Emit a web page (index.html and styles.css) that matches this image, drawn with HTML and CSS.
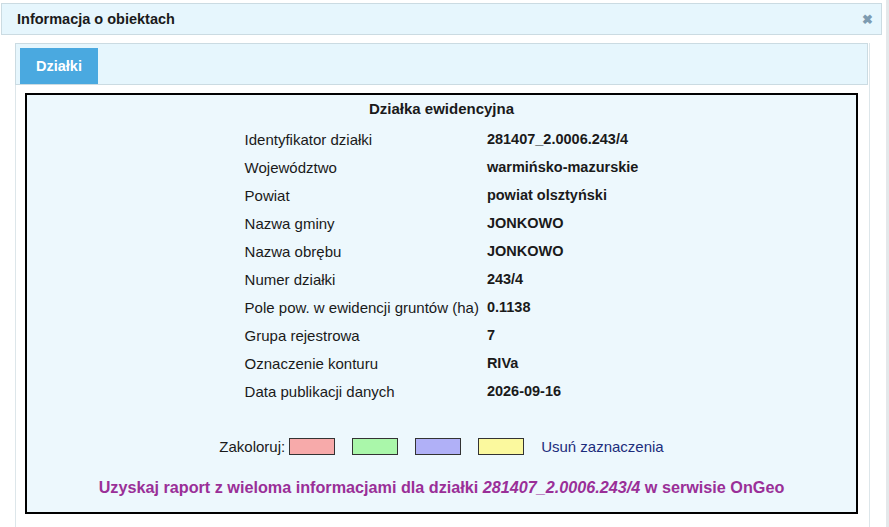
FILE: index.html
```html
<!DOCTYPE html>
<html lang="pl">
<head>
  <meta charset="UTF-8">
  <title>Informacja o obiektach</title>
  <link rel="stylesheet" href="styles.css">
</head>
<body>

<div class="dialog">
    <div class="dialog-title">
        <span>Informacja o obiektach</span>
        <span class="dialog-close">&#10006;</span>
    </div>

    <div class="dialog-panel">
        <div class="tab-bar">
            <div class="tab active">Działki</div>
        </div>

        <div class="info-box">
            <div class="info-heading">Działka ewidencyjna</div>

            <table class="info-table">
                <tr><td>Identyfikator działki</td><td>281407_2.0006.243/4</td></tr>
                <tr><td>Województwo</td><td>warmińsko-mazurskie</td></tr>
                <tr><td>Powiat</td><td>powiat olsztyński</td></tr>
                <tr><td>Nazwa gminy</td><td>JONKOWO</td></tr>
                <tr><td>Nazwa obrębu</td><td>JONKOWO</td></tr>
                <tr><td>Numer działki</td><td>243/4</td></tr>
                <tr><td>Pole pow. w ewidencji gruntów (ha)</td><td>0.1138</td></tr>
                <tr><td>Grupa rejestrowa</td><td>7</td></tr>
                <tr><td>Oznaczenie konturu</td><td>RIVa</td></tr>
                <tr><td>Data publikacji danych</td><td>2026-09-16</td></tr>
            </table>

            <div class="color-row">
                <span class="color-label">Zakoloruj:</span>
                <span class="swatch pink"></span>
                <span class="swatch green"></span>
                <span class="swatch blue"></span>
                <span class="swatch yellow"></span>
                <a href="#" class="clear-link">Usuń zaznaczenia</a>
            </div>

            <div class="report">
                Uzyskaj raport z wieloma informacjami dla działki <i>281407_2.0006.243/4</i> w serwisie OnGeo
            </div>
        </div>
    </div>
</div>

</body>
</html>
```

FILE: styles.css
```css
* {
    margin: 0;
    padding: 0;
    box-sizing: border-box;
}

body {
    font-family: "Liberation Sans", Arial, sans-serif;
    font-size: 15px;
    color: #1a1a1a;
    background: #fff;
    height: 527px;
    overflow: hidden;
    border-right: 3px solid #e4e8ea;
}

.dialog {
    padding: 3px 4px 0 1px;
}

.dialog-title {
    height: 32px;
    display: flex;
    align-items: center;
    justify-content: space-between;
    padding: 0 8px 0 15px;
    background: #e6f6fd;
    border: 1px solid #cbdbe2;
    font-weight: bold;
    font-size: 14.5px;
}

.dialog-close {
    color: #7d9bb1;
    font-size: 13px;
}

.dialog-panel {
    margin: 8px 12px 0 14px;
    height: 500px;
    border-left: 1px solid #dde6ea;
    border-right: 1px solid #dde6ea;
    padding: 0 11px 0 9px;
}

.tab-bar {
    margin: 0 -10px 0 -10px;
    height: 42px;
    background: #e6f6fd;
    border: 1px solid #cbdbe2;
    padding: 4px 0 0 4px;
}

.tab {
    width: 78px;
    height: 36px;
    display: flex;
    align-items: center;
    justify-content: center;
    background: #4aa9e0;
    color: #fff;
    font-weight: bold;
    font-size: 14.5px;
}

.info-box {
    margin-top: 8px;
    height: 421px;
    border: 2px solid #000;
    background: #edf8fd;
    display: flex;
    flex-direction: column;
    align-items: center;
    padding-top: 3px;
}

.info-heading {
    font-weight: bold;
    line-height: 22px;
}

.info-table {
    margin-top: 5px;
    border-collapse: collapse;
}

.info-table td {
    height: 28px;
    padding: 0 4px 0 6px;
}

.info-table td:last-child {
    padding: 0 6px 0 4px;
    font-weight: bold;
    font-size: 14.5px;
}

.color-row {
    margin-top: 33px;
    display: flex;
    align-items: center;
}

.color-label {
    margin-right: 4px;
}

.swatch {
    width: 46px;
    height: 17px;
    border: 1px solid #333;
    margin-right: 17px;
}

.pink { background: #f7aaaa; }
.green { background: #aaf7aa; }
.blue { background: #b0b0f7; }
.yellow { background: #fbf99e; }

.clear-link {
    color: #1c2d7c;
    text-decoration: none;
}

.report {
    margin-top: 23px;
    color: #9a2f98;
    font-weight: bold;
    font-size: 16.2px;
}
```
